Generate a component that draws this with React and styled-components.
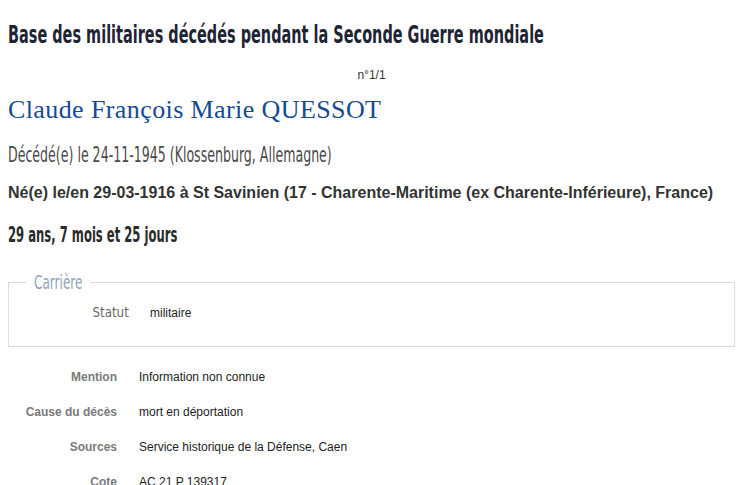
import React from "react";
import styled, { createGlobalStyle } from "styled-components";

const GlobalStyle = createGlobalStyle`
  body {
    margin: 0;
    background: #fff;
    font-family: "Liberation Sans", Arial, sans-serif;
    color: #333;
  }
`;

const condensed = `"DejaVu Sans", sans-serif`;

const Page = styled.div`
  padding: 20px 3px 0 8px;
  width: 727px;
  overflow: hidden;
`;

// narrow display face: squeeze the available sans to the Oswald widths
const Squeeze = styled.span`
  display: inline-block;
  white-space: nowrap;
  transform-origin: ${(p) => (p.$right ? "right" : "left")} center;
  transform: scaleX(${(p) => p.$x});
`;

const PageTitle = styled.h1`
  margin: 0;
  font-family: ${condensed};
  font-weight: bold;
  font-size: 24px;
  line-height: 30px;
  color: #1d2433;
`;

const Counter = styled.div`
  margin-top: 18px;
  text-align: center;
  font-size: 12px;
  line-height: 14px;
  color: #333;
`;

const Name = styled.h2`
  margin: 12px 0 0;
  font-family: "Liberation Serif", "DejaVu Serif", serif;
  font-weight: normal;
  font-size: 26px;
  letter-spacing: 0.4px;
  line-height: 32px;
  color: #154a94;
`;

const Death = styled.div`
  margin-top: 15px;
  font-family: ${condensed};
  font-size: 22px;
  line-height: 28px;
  color: #4a4a4a;
`;

const Birth = styled.div`
  margin-top: 14px;
  font-size: 16px;
  font-weight: bold;
  line-height: 20px;
  color: #333;
`;

const Age = styled.div`
  margin-top: 18px;
  font-family: ${condensed};
  font-weight: bold;
  font-size: 21px;
  line-height: 28px;
  color: #2a2a2a;
`;

const Fieldset = styled.fieldset`
  margin: 23px 0 0;
  padding: 12px 0 18px;
  border: 1px solid #dcdcdc;
  min-width: 0;
`;

const Legend = styled.legend`
  margin-left: 17px;
  padding: 0 6px 0 8px;
  width: 50px;
  font-family: ${condensed};
  font-size: 20px;
  line-height: 20px;
  color: #8fa3b9;
`;

const Row = styled.div`
  display: grid;
  grid-template-columns: ${(p) => p.$label}px 1fr;
  column-gap: ${(p) => p.$gap}px;
  align-items: baseline;
  height: ${(p) => p.$height}px;
`;

const Label = styled.span`
  text-align: right;
  font-weight: bold;
  font-size: 12px;
  color: #7a7a7a;
`;

const NarrowLabel = styled.span`
  text-align: right;
  font-family: ${condensed};
  font-size: 14px;
  color: #666;
`;

const Value = styled.span`
  font-size: 12px;
  color: #222;
`;

const Details = styled.div`
  margin-top: 23px;
`;

const rows = [
  ["Mention", "Information non connue"],
  ["Cause du décès", "mort en déportation"],
  ["Sources", "Service historique de la Défense, Caen"],
  ["Cote", "AC 21 P 139317"],
];

export default function App() {
  return (
    <>
      <GlobalStyle />
      <Page>
        <PageTitle>
          <Squeeze $x={0.603}>Base des militaires décédés pendant la Seconde Guerre mondiale</Squeeze>
        </PageTitle>
        <Counter>n°1/1</Counter>
        <Name>Claude François Marie QUESSOT</Name>
        <Death>
          <Squeeze $x={0.572}>Décédé(e) le 24-11-1945 (Klossenburg, Allemagne)</Squeeze>
        </Death>
        <Birth>
          Né(e) le/en 29-03-1916 à St Savinien (17 - Charente-Maritime (ex Charente-Inférieure), France)
        </Birth>
        <Age>
          <Squeeze $x={0.553}>29 ans, 7 mois et 25 jours</Squeeze>
        </Age>
        <Fieldset>
          <Legend>
            <Squeeze $x={0.604}>Carrière</Squeeze>
          </Legend>
          <Row $label={120} $gap={21} $height={24}>
            <NarrowLabel>
              <Squeeze $x={0.85} $right>Statut</Squeeze>
            </NarrowLabel>
            <Value>militaire</Value>
          </Row>
        </Fieldset>
        <Details>
          {rows.map(([label, value]) => (
            <Row key={label} $label={109} $gap={22} $height={35}>
              <Label>{label}</Label>
              <Value>{value}</Value>
            </Row>
          ))}
        </Details>
      </Page>
    </>
  );
}
